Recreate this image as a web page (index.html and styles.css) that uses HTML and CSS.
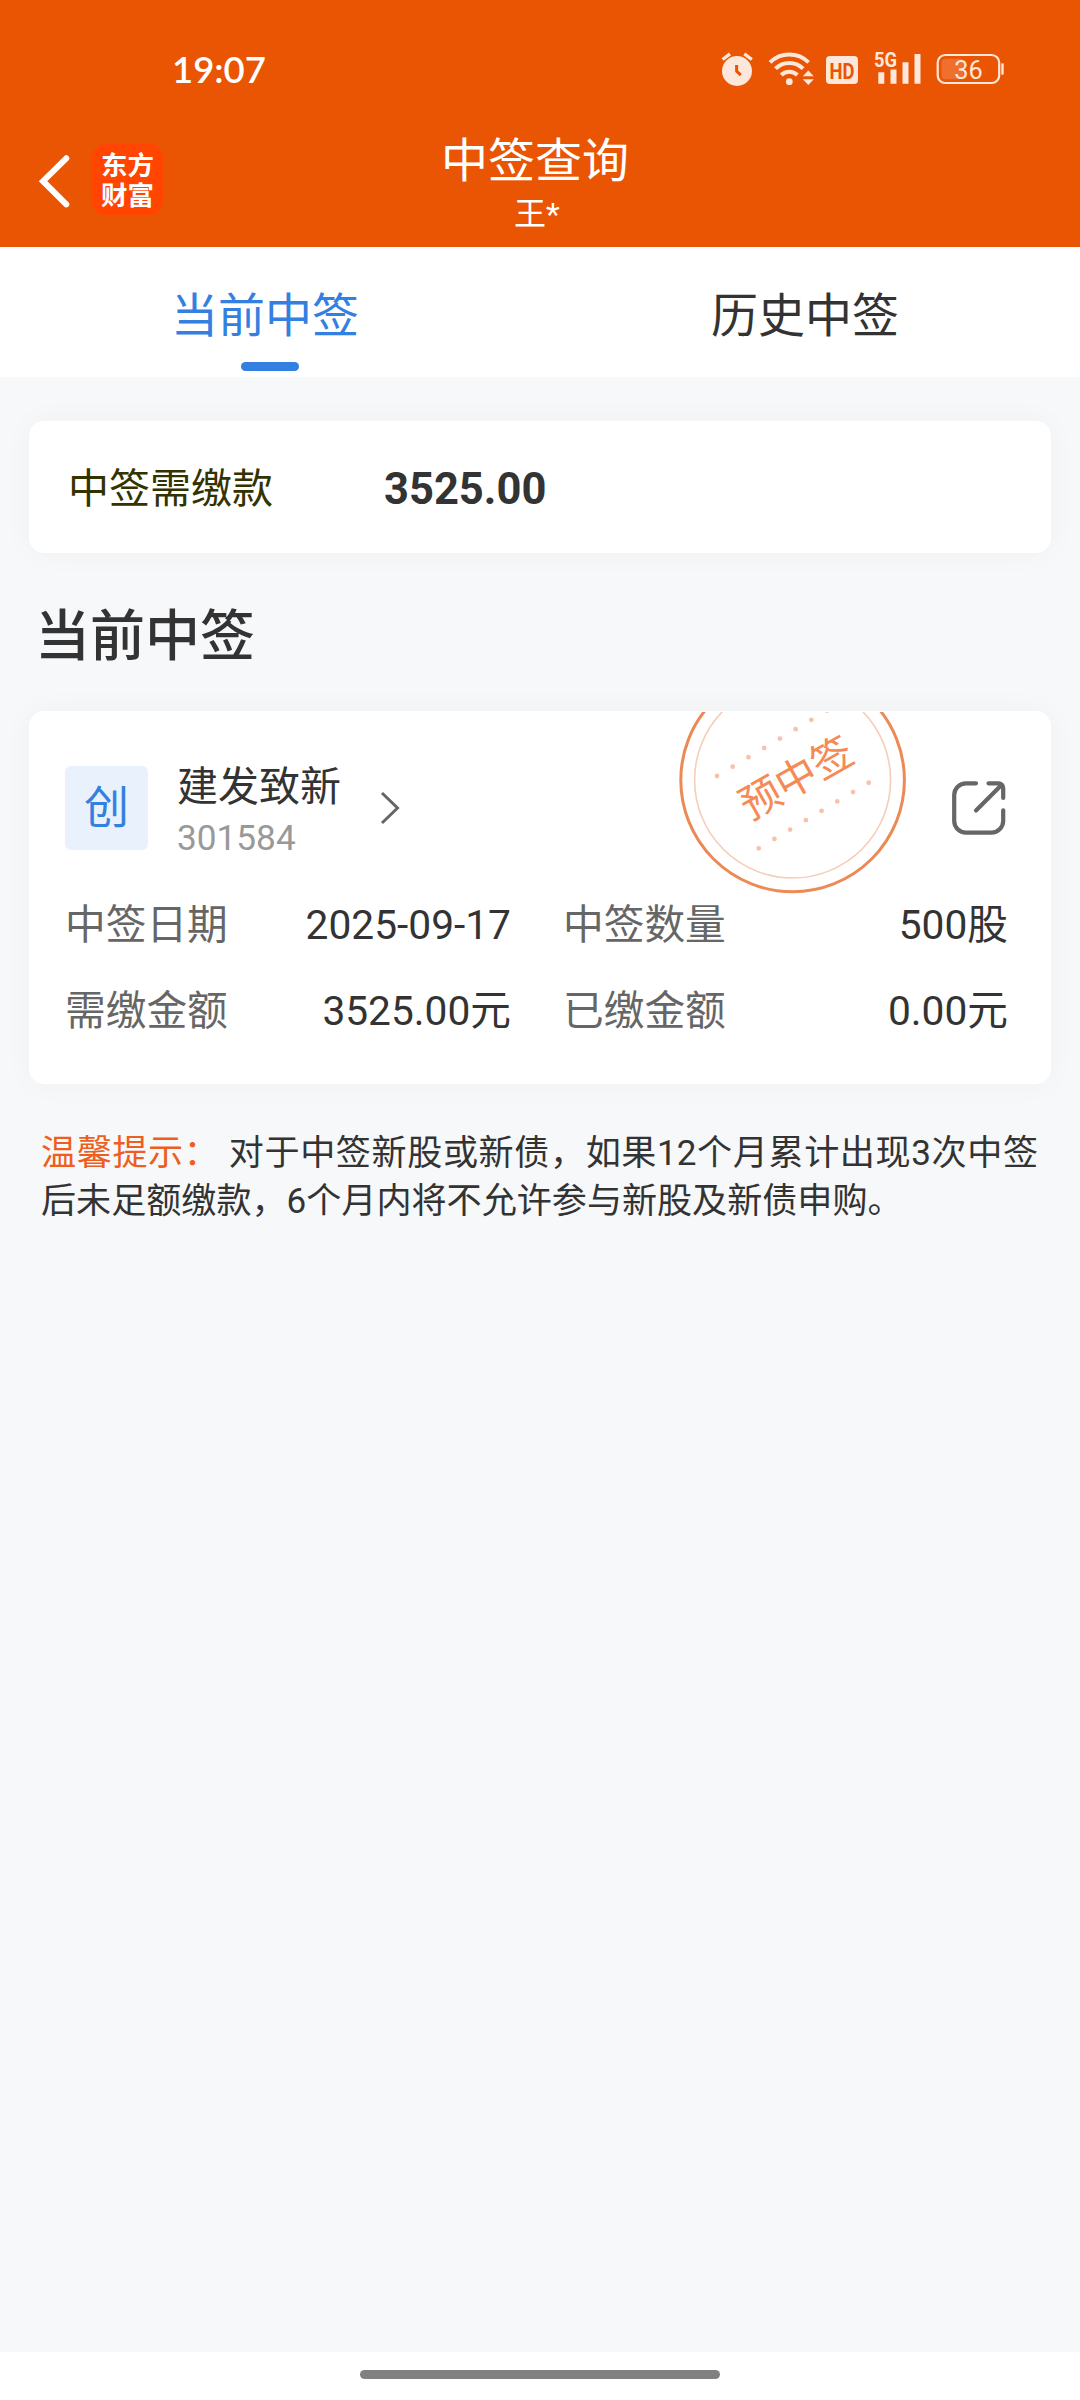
FILE: index.html
```html
<!DOCTYPE html>
<html lang="zh-CN">
<head>
<meta charset="utf-8">
<title>中签查询</title>
<link rel="stylesheet" href="styles.css">
</head>
<body>
<div class="screen">
  <header class="header">
    <div class="status">
      <span class="clock">19:07</span>
      <div class="status-icons">
        <svg width="35" height="40" viewBox="721 50 35 40">
          <circle cx="737" cy="71" r="15" fill="#fde6da"/>
          <path d="M722.5 59.5 730 53.8M744.3 53.8 751.8 59.5" stroke="#fde6da" stroke-width="3.4" fill="none"/>
          <path d="M736.6 65v6.2l4.2 4" stroke="#ea5504" stroke-width="3" fill="none"/>
        </svg>
        <svg width="46" height="40" viewBox="768 50 46 40">
          <g fill="none" stroke="#fde6da" stroke-width="4">
            <path d="M770 62.3a27.5 27.5 0 0 1 38.6 0"/>
            <path d="M775.5 68.6a19.5 19.5 0 0 1 27.6 0"/>
            <path d="M781.2 75a11.5 11.5 0 0 1 16.2 0"/>
          </g>
          <circle cx="789.3" cy="81.7" r="3.4" fill="#fde6da"/>
          <path d="M808.3 70.5 813.8 76.3h-11zM802.8 79.3h11l-5.5 5.7z" fill="#fde6da"/>
        </svg>
        <svg width="35" height="40" viewBox="826 50 35 40">
          <rect x="826" y="56" width="32" height="28" rx="4" fill="#fde6da"/>
          <text class="icon-text bold" x="829.5" y="78.6" font-size="22.5" fill="#ea5504" textLength="25" lengthAdjust="spacingAndGlyphs">HD</text>
        </svg>
        <svg width="51" height="40" viewBox="873 50 51 40">
          <text class="icon-text bold" x="874" y="67" font-size="20" fill="#fde6da" textLength="23" lengthAdjust="spacingAndGlyphs">5G</text>
          <path d="M878.3 72.3h6v11.5h-6zM890.5 69.5h6v14.3h-6zM902.5 62.3h6v21.5h-6zM914.5 54h6v29.8h-6z" fill="#fde6da"/>
        </svg>
        <svg width="70" height="40" viewBox="936 50 70 40">
          <rect x="937.7" y="55" width="61.5" height="28" rx="7.5" fill="none" stroke="#fde6da" stroke-width="2.2"/>
          <rect x="941.5" y="58.8" width="22" height="20.5" rx="4" fill="#ee702c"/>
          <rect x="1001.3" y="63.3" width="2.4" height="11.4" rx="1" fill="#fde6da"/>
          <text class="icon-text" x="954.3" y="78.7" font-size="25" fill="#fde6da" textLength="28.5" lengthAdjust="spacingAndGlyphs">36</text>
        </svg>
      </div>
    </div>
    <div class="navbar">
      <div class="nav-left">
        <svg width="32" height="54" viewBox="0 0 32 54"><path d="M27.3 4.3 4 27.2 27.3 50.3" fill="none" stroke="#fff" stroke-width="6" stroke-linecap="round" stroke-linejoin="miter"/></svg>
        <div class="logo"><span>东方</span><span>财富</span></div>
      </div>
      <div class="nav-title">
        <h1>中签查询</h1>
        <p>王*</p>
      </div>
    </div>
  </header>

  <nav class="tabs">
    <div class="tab active"><span>当前中签</span></div>
    <div class="tab"><span>历史中签</span></div>
  </nav>

  <main class="content">
    <section class="card summary">
      <span class="summary-label">中签需缴款</span>
      <span class="summary-value">3525.00</span>
    </section>

    <h2>当前中签</h2>

    <section class="card detail">
      <svg class="stamp" width="230" height="183" viewBox="678 712 230 183">
        <circle cx="792.6" cy="780" r="111.8" fill="none" stroke="#ec8a55" stroke-width="3"/>
        <circle cx="792.6" cy="780" r="98" fill="none" stroke="#f6cdb8" stroke-width="1.6"/>
        <path d="M717 776 830 708.7M758.7 848.3 871 781.4" fill="none" stroke="#f5c3a9" stroke-width="4.8" stroke-linecap="round" stroke-dasharray="0 18.3"/>
        <text class="stamp-text" x="796.3" y="778" transform="rotate(-29.5 796.3 778)" dy="14.5" text-anchor="middle">预中签</text>
      </svg>
      <div class="stock">
        <div class="board">创</div>
        <div class="stock-name">
          <span class="name">建发致新</span>
          <span class="code">301584</span>
        </div>
        <svg class="chevron" width="20" height="34" viewBox="380 791 20 34"><path d="M382 793 397.5 808 382 823" fill="none" stroke="#666" stroke-width="3"/></svg>
        <svg class="share" width="54" height="54" viewBox="0 0 54 54">
          <g fill="none" stroke="#666" stroke-width="4.2" stroke-linecap="round" stroke-linejoin="round">
            <path d="M24 2.3H14A11.8 11.8 0 0 0 2.2 14v26A11.8 11.8 0 0 0 14 51.6h25.3A11.8 11.8 0 0 0 51.2 40V29.3"/>
            <path d="M36.5 2.3h10.2a4.5 4.5 0 0 1 4.5 4.5V17M49.5 4 24 29.6"/>
          </g>
        </svg>
      </div>
      <dl class="grid">
        <div><dt>中签日期</dt><dd>2025-09-17</dd></div>
        <div><dt>中签数量</dt><dd>500股</dd></div>
        <div><dt>需缴金额</dt><dd>3525.00元</dd></div>
        <div><dt>已缴金额</dt><dd>0.00元</dd></div>
      </dl>
    </section>

    <p class="tip"><span>温馨提示：</span> 对于中签新股或新债，如果12个月累计出现3次中签后未足额缴款，6个月内将不允许参与新股及新债申购。</p>
  </main>

  <footer class="gesture"><div class="handle"></div></footer>
</div>
</body>
</html>
```
FILE: styles.css
```css
* { box-sizing: border-box; margin: 0; padding: 0; }

body {
  width: 1080px;
  font-family: Roboto, "Noto Sans CJK SC", sans-serif;
  color: #333;
  background: #f7f8fa;
}

svg { display: block; flex: none; }

.screen { display: flex; flex-direction: column; height: 2400px; }

.header { height: 247px; background: #ea5504; color: #fff; }

.status {
  display: flex;
  justify-content: space-between;
  align-items: center;
  height: 140px;
  padding: 0 74px 0 172px;
}
.clock { font: 600 36.5px/40px Lato, sans-serif; margin-bottom: 3px; }
.status-icons { display: flex; gap: 12px; }
.status-icons svg { overflow: visible; }
.icon-text { font-family: Roboto, sans-serif; }
.bold { font-weight: 700; }

.navbar { display: grid; grid-template-columns: 440px 190px 1fr; height: 107px; }
.nav-left { display: flex; align-items: flex-start; padding: 4px 0 0 39px; }
.nav-left svg { margin-top: 10px; }
.logo {
  display: flex;
  flex-direction: column;
  width: 71px;
  height: 71px;
  margin-left: 21px;
  padding-top: 5px;
  border-radius: 14px;
  background: #ff4500;
  text-align: center;
  font: 700 26.5px/30px "Noto Sans CJK SC", sans-serif;
}
.nav-title { text-align: center; white-space: nowrap; }
.nav-title h1 { font: 400 47px/60px "Noto Sans CJK SC", sans-serif; margin-top: -13px; }
.nav-title p { font-size: 32px; line-height: 40px; margin-top: 7px; padding-left: 4px; }

.tabs { display: grid; grid-template-columns: 1fr 1fr; height: 130px; background: #fff; }
.tab {
  display: flex;
  flex-direction: column;
  align-items: center;
  padding: 39px 10px 0 0;
  font-size: 47px;
  line-height: 60px;
}
.active { color: #3480e0; }
.active::after {
  content: "";
  width: 58px;
  height: 9px;
  margin: 16px 0 0 10px;
  border-radius: 4.5px;
  background: #3480e0;
}

.content { flex: 1; padding: 44px 29px 0; }
.card {
  border-radius: 15px;
  background: #fff;
  box-shadow: 0 0 30px rgba(0, 0, 0, .035);
}
.summary { display: flex; align-items: center; height: 132px; padding-left: 39px; }
.summary-label { width: 316px; margin-bottom: 5px; font-size: 41px; color: #330; }
.summary-value { margin-top: 4px; font-size: 43.5px; font-weight: 700; }

h2 { margin: 47px 0 0 6px; font-size: 55px; line-height: 72px; font-weight: 500; }

.detail { position: relative; height: 373px; margin-top: 39px; padding: 46px 43px 0 36px; }
.stamp { position: absolute; left: 649px; top: 1px; }
.stamp-text { font-size: 41px; fill: #f58a54; }

.stock { display: flex; align-items: flex-start; height: 126px; }
.board {
  width: 83px;
  height: 84px;
  margin-top: 9px;
  border-radius: 6px;
  background: #e9f2fc;
  color: #3480e0;
  text-align: center;
  font-size: 45px;
  line-height: 86px;
}
.stock-name { display: flex; flex-direction: column; margin: 2px 0 0 29px; white-space: nowrap; }
.name { font-size: 41px; line-height: 56px; }
.code { font-size: 35.2px; line-height: 47px; color: #999; }
.chevron { margin: 34px 0 0 39px; }
.share { margin: 24px 2px 0 auto; }

.grid { display: grid; grid-template-columns: 446px 445px; justify-content: space-between; row-gap: 26px; padding-top: 12px; width: 943px; }
.grid > div { display: flex; justify-content: space-between; font-size: 40.7px; line-height: 60px; }
.grid dt { color: #666; }

.tip { width: 997px; margin: 45px 0 0 12px; font-size: 35.1px; line-height: 48px; text-align: justify; }
.tip span { color: #ee5e1e; }

.gesture { display: flex; justify-content: center; height: 48px; padding-top: 18px; background: #fff; }
.handle { width: 360px; height: 9px; border-radius: 4.5px; background: #808080; }
```
